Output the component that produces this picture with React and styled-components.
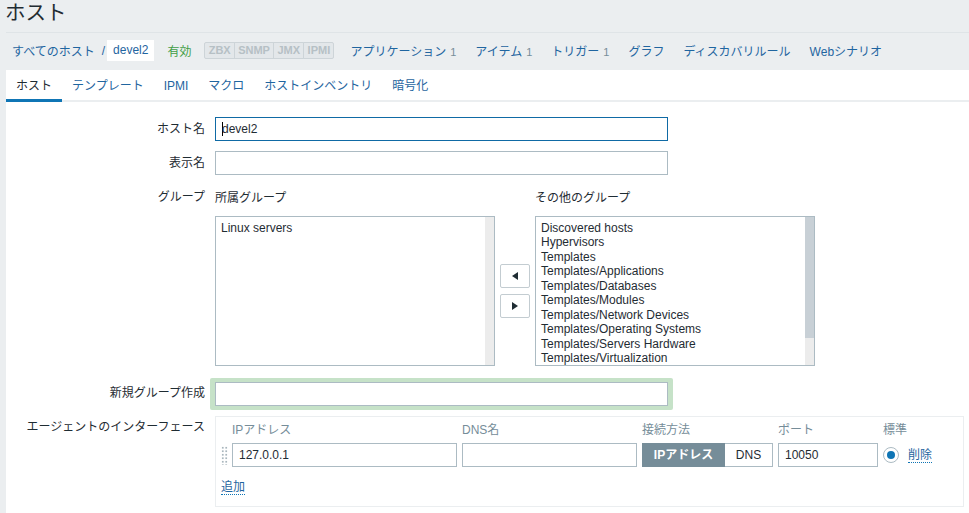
import React from 'react';
import styled, { createGlobalStyle } from 'styled-components';

const jp = `Arial, "Liberation Sans", "Noto Sans CJK JP", sans-serif`;

const GlobalStyle = createGlobalStyle`
  html, body {
    margin: 0;
    padding: 0;
    height: 513px;
    overflow: hidden;
    background: #ebeef0;
    font-family: ${jp};
    font-size: 12px;
    color: #1f2c33;
  }
  * { box-sizing: border-box; }
`;

const Page = styled.div`
  width: 969px;
  height: 513px;
  overflow: hidden;
  padding-left: 6px;
`;

const Title = styled.h1`
  margin: 0;
  height: 33px;
  border-bottom: 1px solid #dfe4e7;
  font-size: 20.5px;
  font-weight: 400;
  line-height: 25px;
  text-indent: -1px;
  color: #1f2c33;
`;

const Nav = styled.div`
  display: flex;
  align-items: center;
  height: 37px;
  padding: 0 0 2px 6px;
`;

const NavLink = styled.span`
  color: #1f65a0;
  margin-left: ${p => p.$gap || 0}px;
  white-space: nowrap;
  small {
    font-size: 11px;
    color: #768d99;
    margin-left: 4px;
  }
`;

const Crumb = styled.span`
  background: #fff;
  color: #1f65a0;
  height: 21px;
  line-height: 21px;
  padding: 0 6px;
  margin-left: 2px;
`;

const Status = styled.span`
  color: #429e47;
  margin-left: 13px;
`;

const Badges = styled.div`
  display: flex;
  margin-left: 13px;
  margin-right: 16px;
`;

const Badge = styled.span`
  height: 17px;
  line-height: 15px;
  padding: 0 3.25px;
  border: 1px solid #cdd4d8;
  margin-left: -1px;
  background: #e3e7ea;
  color: #b6c0c5;
  font-size: 11px;
  font-weight: 700;
  &:first-child { margin-left: 0; border-radius: 2px 0 0 2px; }
  &:last-child { border-radius: 0 2px 2px 0; }
`;

const Panel = styled.div`
  background: #fff;
  height: 443px;
`;

const Tabs = styled.div`
  display: flex;
  height: 32px;
  border-bottom: 2px solid #ebeef0;
`;

const Tab = styled.div`
  height: 32px;
  line-height: 32px;
  padding: 0 10px;
  color: ${p => (p.$active ? '#1f2c33' : '#1f65a0')};
  border-bottom: 3px solid ${p => (p.$active ? '#0f75b5' : 'transparent')};
  white-space: nowrap;
`;

const Form = styled.div`
  padding-top: 15px;
`;

const Row = styled.div`
  display: grid;
  grid-template-columns: 199px 1fr;
  column-gap: 10px;
  margin-bottom: ${p => p.$mb ?? 10}px;
`;

const Label = styled.div`
  text-align: right;
  line-height: 21px;
  padding-top: ${p => p.$pt ?? 2}px;
  white-space: nowrap;
  color: #1f2c33;
`;

const Input = styled.div`
  width: ${p => p.$w || 453}px;
  height: 24px;
  line-height: 22px;
  padding: 0 6px;
  background: #fff;
  border: 1px solid ${p => (p.$focus ? '#0f6aa5' : '#acbbc3')};
  color: #1f2c33;
`;

const Caret = styled.span`
  display: inline-block;
  width: 1px;
  height: 14px;
  background: #000;
  vertical-align: -3px;
  margin-right: -1px;
`;

const GroupGrid = styled.div`
  display: grid;
  grid-template-columns: 280px 40px 280px;
  padding-top: 5px;
`;

const GroupTitle = styled.div`
  height: 26px;
  line-height: 14px;
  padding-top: 1px;
  color: #1f2c33;
`;

const ListBox = styled.div`
  position: relative;
  height: 150px;
  width: 280px;
  border: 1px solid #acbbc3;
  padding: 4px 5px 0;
  overflow: hidden;
  line-height: 14.44px;
  color: #1f2c33;
`;

const Track = styled.div`
  position: absolute;
  top: 0;
  right: 0;
  bottom: 0;
  width: 9px;
  background: #ececec;
`;

const Thumb = styled.div`
  height: 121px;
  background: #c8d0d6;
`;

const Arrows = styled.div`
  display: flex;
  flex-direction: column;
  align-items: center;
  gap: 6px;
  padding-top: 74px;
`;

const ArrowButton = styled.div`
  width: 30px;
  height: 24px;
  display: flex;
  align-items: center;
  justify-content: center;
  background: #fff;
  border: 1px solid #c3ccd1;
  border-radius: 2px;
`;

const NewGroupWrap = styled.div`
  width: 463px;
  margin-left: -5px;
  padding: 4px 5px;
  height: 32px;
  background: #c6e2c8;
  border-radius: 2px;
`;

const IfaceBox = styled.div`
  width: 749px;
  height: 91px;
  border: 1px solid #ebeef0;
  padding-left: 5px;
`;

const IfaceGrid = styled.div`
  display: grid;
  grid-template-columns: 6px 225px 175px 131px 100px auto;
  column-gap: 5px;
  align-items: center;
`;

const ColHead = styled.div`
  height: 26px;
  line-height: 26px;
  color: #768d99;
  white-space: nowrap;
`;

const Grip = styled.div`
  width: 7px;
  height: 19px;
  background-image: radial-gradient(circle, #a9b6bd 1px, transparent 1.2px);
  background-size: 3.5px 3.5px;
`;

const Toggle = styled.div`
  display: flex;
  height: 24px;
`;

const ToggleOption = styled.div`
  flex: ${p => (p.$on ? '0 0 83px' : '1')};
  text-align: center;
  line-height: 22px;
  background: ${p => (p.$on ? '#768d99' : '#fff')};
  color: ${p => (p.$on ? '#fff' : '#1f2c33')};
  font-weight: ${p => (p.$on ? 700 : 400)};
  border: 1px solid ${p => (p.$on ? '#768d99' : '#acbbc3')};
  border-left-width: ${p => (p.$on ? 1 : 0)}px;
`;

const RadioCell = styled.div`
  display: flex;
  align-items: center;
  gap: 9px;
`;

const Radio = styled.div`
  width: 16px;
  height: 16px;
  border: 1px solid #acbbc3;
  border-radius: 50%;
  display: flex;
  align-items: center;
  justify-content: center;
  &::after {
    content: '';
    width: 8px;
    height: 8px;
    border-radius: 50%;
    background: #0f75b5;
  }
`;

const DotLink = styled.span`
  color: #1f65a0;
  border-bottom: 1px dotted #0f75b5;
  line-height: 14px;
`;

const AddLine = styled.div`
  padding-top: 13px;
`;

const otherGroups = [
  'Discovered hosts',
  'Hypervisors',
  'Templates',
  'Templates/Applications',
  'Templates/Databases',
  'Templates/Modules',
  'Templates/Network Devices',
  'Templates/Operating Systems',
  'Templates/Servers Hardware',
  'Templates/Virtualization',
];

const navItems = [
  ['アプリケーション', 1],
  ['アイテム', 1],
  ['トリガー', 1],
  ['グラフ'],
  ['ディスカバリルール'],
  ['Webシナリオ'],
];

const tabs = ['テンプレート', 'IPMI', 'マクロ', 'ホストインベントリ', '暗号化'];

const Triangle = ({ flip }) => (
  <svg width="6" height="8" viewBox="0 0 6 8" style={flip ? { transform: 'scaleX(-1)' } : undefined}>
    <path d="M0 0 L6 4 L0 8 Z" fill="#1f2c33" />
  </svg>
);

export default function App() {
  return (
    <Page>
      <GlobalStyle />
      <Title>ホスト</Title>
      <Nav>
        <NavLink>すべてのホスト</NavLink>
        <NavLink $gap={7}>/</NavLink>
        <Crumb>devel2</Crumb>
        <Status>有効</Status>
        <Badges>
          <Badge>ZBX</Badge>
          <Badge>SNMP</Badge>
          <Badge>JMX</Badge>
          <Badge>IPMI</Badge>
        </Badges>
        {navItems.map(([name, count], i) => (
          <NavLink key={name} $gap={i ? 19 : 0}>
            {name}
            {count && <small>{count}</small>}
          </NavLink>
        ))}
      </Nav>
      <Panel>
        <Tabs>
          <Tab $active>ホスト</Tab>
          {tabs.map(t => (
            <Tab key={t}>{t}</Tab>
          ))}
        </Tabs>
        <Form>
          <Row>
            <Label>ホスト名</Label>
            <Input $focus>
              <Caret />
              devel2
            </Input>
          </Row>
          <Row>
            <Label>表示名</Label>
            <Input />
          </Row>
          <Row $mb={12}>
            <Label>グループ</Label>
            <GroupGrid>
              <div>
                <GroupTitle>所属グループ</GroupTitle>
                <ListBox>
                  Linux servers
                  <Track />
                </ListBox>
              </div>
              <Arrows>
                <ArrowButton>
                  <Triangle flip />
                </ArrowButton>
                <ArrowButton>
                  <Triangle />
                </ArrowButton>
              </Arrows>
              <div>
                <GroupTitle>その他のグループ</GroupTitle>
                <ListBox>
                  {otherGroups.map(g => (
                    <div key={g}>{g}</div>
                  ))}
                  <Track>
                    <Thumb />
                  </Track>
                </ListBox>
              </div>
            </GroupGrid>
          </Row>
          <Row $mb={6}>
            <Label $pt={5}>新規グループ作成</Label>
            <NewGroupWrap>
              <Input />
            </NewGroupWrap>
          </Row>
          <Row $mb={0}>
            <Label $pt={1}>エージェントのインターフェース</Label>
            <IfaceBox>
              <IfaceGrid>
                <span />
                <ColHead>IPアドレス</ColHead>
                <ColHead>DNS名</ColHead>
                <ColHead>接続方法</ColHead>
                <ColHead>ポート</ColHead>
                <ColHead>標準</ColHead>
                <Grip />
                <Input $w={225}>127.0.0.1</Input>
                <Input $w={175} />
                <Toggle>
                  <ToggleOption $on>IPアドレス</ToggleOption>
                  <ToggleOption>DNS</ToggleOption>
                </Toggle>
                <Input $w={100}>10050</Input>
                <RadioCell>
                  <Radio />
                  <DotLink>削除</DotLink>
                </RadioCell>
              </IfaceGrid>
              <AddLine>
                <DotLink>追加</DotLink>
              </AddLine>
            </IfaceBox>
          </Row>
        </Form>
      </Panel>
    </Page>
  );
}
